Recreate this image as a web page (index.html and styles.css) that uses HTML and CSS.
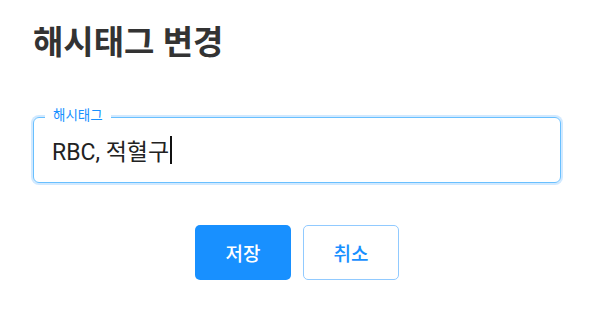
FILE: index.html
```html
<!DOCTYPE html>
<html>
	<head>
		<meta charset="utf-8">
		<title>해시태그 변경</title>
		<meta name="viewport" content="width=device-width, initial-scale=1">
		<link rel="stylesheet" href="styles.css">
	</head>
	<body>
		<main class="dialog">
			<h1 class="title">해시태그 변경</h1>
			<div class="field">
				<span class="field-label">해시태그</span>
				<div class="field-input">RBC, 적혈구<span class="caret"></span></div>
			</div>
			<div class="actions">
				<button class="btn btn-primary">저장</button>
				<button class="btn btn-outline">취소</button>
			</div>
		</main>
	</body>
</html>
```

FILE: styles.css
```css
body {
	margin: 0;
	background-color: white;
	font-family: Roboto, "Noto Sans CJK KR", sans-serif;
}
.dialog {
	padding: 21px 34px 0 33px;
}
.title {
	margin: 0;
	font-size: 33px;
	line-height: 44px;
	font-weight: bold;
	color: #333333;
}

/* input with label sitting on the border */
.field {
	position: relative;
	margin-top: 52px;
	height: 64px;
	border: 1px solid #69c0ff;
	border-radius: 6px;
	box-shadow: 0 0 0 2px rgba(24, 144, 255, 0.2);
	display: flex;
	align-items: center;
}
.field-label {
	position: absolute;
	left: 11px;
	top: -11px;
	padding: 0 8px;
	background-color: white;
	font-size: 13.5px;
	line-height: 16px;
	color: #1890ff;
}
.field-input {
	padding-left: 18px;
	font-size: 23px;
	color: #222222;
	display: flex;
	align-items: center;
}
.caret {
	display: inline-block;
	width: 2px;
	height: 28px;
	margin-left: 1px;
	background-color: #111111;
}

.actions {
	display: flex;
	justify-content: center;
	gap: 12px;
	margin-top: 42px;
}
.btn {
	width: 96px;
	height: 55px;
	border-radius: 5px;
	font-family: Roboto, "Noto Sans CJK KR", sans-serif;
	font-size: 19px;
	font-weight: 500;
	cursor: pointer;
}
.btn-primary {
	border: none;
	background-color: #1890ff;
	color: white;
}
.btn-outline {
	border: 1px solid #91caff;
	background-color: white;
	color: #1890ff;
}
```
